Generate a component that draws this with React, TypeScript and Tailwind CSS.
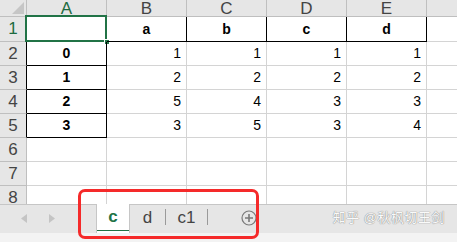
import React from 'react';

const COLS = ['A', 'B', 'C', 'D', 'E'];

type Cell = { v: string; bold?: boolean; align?: 'center' | 'right' };

// sheet contents, rows 1..8
const ROWS: Cell[][] = [
  [{ v: '' }, { v: 'a', bold: true, align: 'center' }, { v: 'b', bold: true, align: 'center' }, { v: 'c', bold: true, align: 'center' }, { v: 'd', bold: true, align: 'center' }],
  [{ v: '0', bold: true, align: 'center' }, { v: '1', align: 'right' }, { v: '1', align: 'right' }, { v: '1', align: 'right' }, { v: '1', align: 'right' }],
  [{ v: '1', bold: true, align: 'center' }, { v: '2', align: 'right' }, { v: '2', align: 'right' }, { v: '2', align: 'right' }, { v: '2', align: 'right' }],
  [{ v: '2', bold: true, align: 'center' }, { v: '5', align: 'right' }, { v: '4', align: 'right' }, { v: '3', align: 'right' }, { v: '3', align: 'right' }],
  [{ v: '3', bold: true, align: 'center' }, { v: '3', align: 'right' }, { v: '5', align: 'right' }, { v: '3', align: 'right' }, { v: '4', align: 'right' }],
  [{ v: '' }, { v: '' }, { v: '' }, { v: '' }, { v: '' }],
  [{ v: '' }, { v: '' }, { v: '' }, { v: '' }, { v: '' }],
  [{ v: '' }, { v: '' }, { v: '' }, { v: '' }, { v: '' }],
];

// which cells carry a thin black border (row index, col index)
const boxed = (r: number, c: number) =>
  (c === 0 && r >= 1 && r <= 4) || (r === 0 && c >= 1 && c <= 4);

const font = { fontFamily: '"Liberation Sans", "Noto Sans CJK SC", sans-serif' };

function DataCell({ r, c }: { r: number; c: number }) {
  const cell = ROWS[r][c];
  const right = boxed(r, c) || boxed(r, c + 1);
  const bottom = boxed(r, c) || boxed(r + 1, c);
  const h = r === 0 ? 'h-[25px]' : 'h-[24px]';
  return (
    <div
      className={`relative w-[80px] shrink-0 border-r border-b ${h} ${right ? 'border-r-black' : 'border-r-[#d4d4d4]'} ${bottom ? 'border-b-black' : 'border-b-[#d4d4d4]'} flex items-center px-[5px] text-[14px] text-black ${cell.align === 'center' ? 'justify-center' : 'justify-end'} ${cell.bold ? 'font-bold' : ''}`}
    >
      {cell.v}
      {r === 0 && c === 0 && (
        <>
          <div className="absolute left-[-2px] top-[-2px] w-[82px] h-[27px] border-2 border-[#217346]" />
          <div className="absolute right-[-4px] bottom-[-4px] w-[6px] h-[6px] bg-[#217346] border border-white" />
        </>
      )}
    </div>
  );
}

function Grid() {
  return (
    <div className="h-[204px] overflow-hidden bg-white">
      {/* column headers */}
      <div className="flex h-[17px]">
        <div className="relative w-[27px] shrink-0 bg-[#e6e6e6] border-r border-b border-[#bfbfbf]">
          <svg className="absolute right-[2px] bottom-[2px]" width="12" height="12" viewBox="0 0 12 12">
            <path d="M12 0 L12 12 L0 12 Z" fill="#c6c6c6" />
          </svg>
        </div>
        {COLS.map((c, i) => (
          <div
            key={c}
            className={`w-[80px] shrink-0 bg-[#e6e6e6] border-r border-b border-[#bfbfbf] flex items-center justify-center text-[17px] leading-none ${i === 0 ? 'text-[#1e6b41]' : 'text-[#444]'}`}
          >
            {c}
          </div>
        ))}
        <div className="flex-1 bg-[#e6e6e6] border-b border-[#bfbfbf]" />
      </div>
      {ROWS.map((row, r) => (
        <div key={r} className="flex">
          <div
            className={`w-[27px] shrink-0 bg-[#e6e6e6] border-r border-b border-b-[#bfbfbf] flex items-center justify-center text-[17px] ${r === 0 ? 'h-[25px] text-[#1e6b41]' : 'h-[24px] text-[#444]'} ${r >= 1 && r <= 4 ? 'border-r-black' : 'border-r-[#bfbfbf]'}`}
          >
            {r + 1}
          </div>
          {row.map((_, c) => (
            <DataCell key={c} r={r} c={c} />
          ))}
          <div className={`flex-1 border-b border-[#d4d4d4] ${r === 0 ? 'h-[25px]' : 'h-[24px]'}`} />
        </div>
      ))}
    </div>
  );
}

function PlusCircle() {
  return (
    <svg width="16" height="16" viewBox="0 0 16 16">
      <circle cx="8" cy="8" r="7" fill="none" stroke="#7a7a7a" strokeWidth="1.2" />
      <path d="M8 4 V12 M4 8 H12" stroke="#7a7a7a" strokeWidth="1.6" />
    </svg>
  );
}

function SheetTabs() {
  return (
    <div className="relative h-[29px] bg-[#e6e6e6] border-t border-[#c6c6c6] flex items-stretch">
      {/* scroll arrows */}
      <div className="w-[96px] flex items-center pl-[21px] gap-[22px] pb-[2px]">
        <svg width="6" height="9" viewBox="0 0 6 9">
          <path d="M6 0 L0 4.5 L6 9 Z" fill="#c4c4c4" />
        </svg>
        <svg width="6" height="9" viewBox="0 0 6 9">
          <path d="M0 0 L6 4.5 L0 9 Z" fill="#c4c4c4" />
        </svg>
      </div>
      <div className="-mt-px w-[34px] bg-white border-x border-[#c6c6c6] flex flex-col">
        <div className="flex-1 flex items-center justify-center text-[17px] font-bold text-[#217346]">c</div>
        <div className="h-[2px] bg-[#217346] mb-[3px]" />
      </div>
      <div className="w-[35px] flex items-center justify-center text-[17px] text-[#444] pb-[3px]">d</div>
      <div className="w-px my-[4px] mb-[8px] bg-[#9a9a9a]" />
      <div className="w-[41px] flex items-center justify-center text-[17px] text-[#444] pb-[3px]">c1</div>
      <div className="w-px my-[4px] mb-[8px] bg-[#9a9a9a]" />
      <div className="ml-[33px] flex items-center pb-[3px]">
        <PlusCircle />
      </div>
      <div className="flex-1 flex items-center justify-end pr-[12px] pb-[3px]">
        <span
          className="text-[13px] text-[#fafafa] tracking-[0.5px]"
          style={{ textShadow: '0 0 1px #8a8a8a, 0 0 1px #8a8a8a' }}
        >
          知乎 @秋枫切王剑
        </span>
      </div>
      {/* red annotation box */}
      <div className="absolute left-[78px] top-[-16px] w-[181px] h-[50px] border-[3px] border-[#f52a2a] rounded-[7px]" />
    </div>
  );
}

export default function App() {
  return (
    <div className="w-[457px] h-[242px] flex flex-col overflow-hidden bg-white" style={font}>
      <Grid />
      <SheetTabs />
      <div className="flex-1 bg-[#f3f3f3]" />
    </div>
  );
}
